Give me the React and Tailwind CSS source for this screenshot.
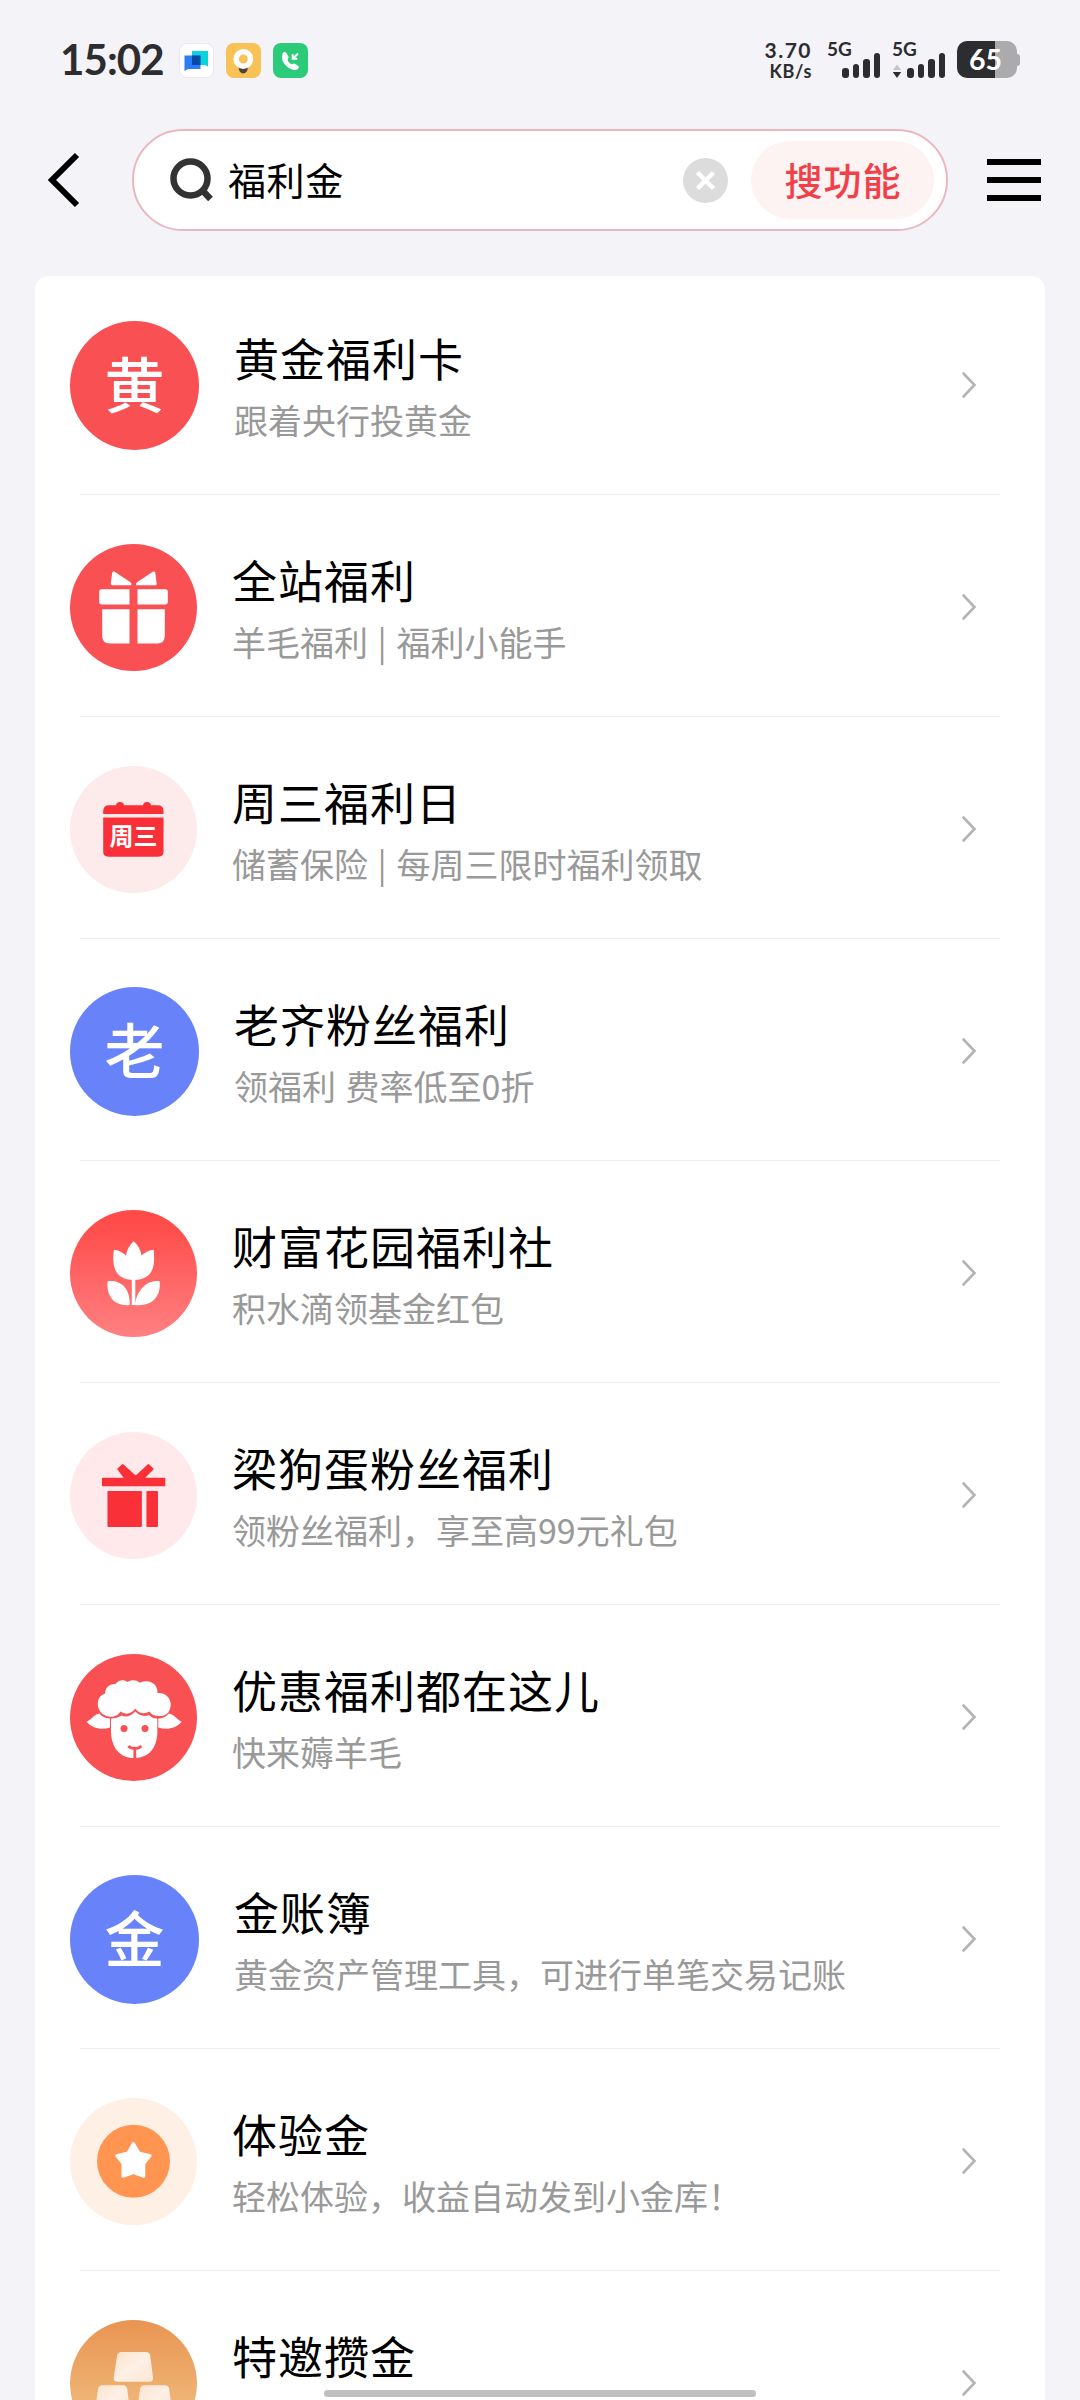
import React from "react";
import clsx from "clsx";

const GiftIcon = () => (
	<svg viewBox="0 0 127 127" className="size-full">
		<circle cx="63.5" cy="63.5" r="63.5" fill="#f95054" />
		<g fill="#fff">
			<path d="M40.8 39.5l1.4-10.8q.6-2 2.6-.9l15.6 10.5q1.400 1.200.9 2.900H42q-1.500-.2-1.200-1.700z" />
			<path d="M86.700 39.500l-1.400-10.800q-.6-2-2.600-.9l-15.600 10.500q-1.400 1.200-.9 2.900H85.500q1.500-.2 1.200-1.700z" />
			<path d="M59.500 45.200v15.200H31.500q-2.300 0-2.300-2.300V47.500q0-2.300 2.300-2.300z" />
			<path d="M67.500 45.200v15.200h28q2.300 0 2.300-2.300V47.500q0-2.300-2.300-2.300z" />
			<path d="M59.500 65.200v34.300H40q-7.800 0-7.800-7.800V65.200z" />
			<path d="M67.500 65.200v34.300H87q7.800 0 7.800-7.800V65.200z" />
		</g>
	</svg>
);

const CalendarIcon = () => (
	<svg viewBox="0 0 127 127" className="size-full">
		<circle cx="63.500" cy="63.500" r="63.500" fill="#fdeaea" />
		<g fill="#f93038">
			<circle cx="50" cy="40" r="4" />
			<circle cx="77" cy="40" r="4" />
			<path d="M33.200 48v-3q0-5.800 5.800-5.800h48.700q5.800 0 5.800 5.800V48z" />
			<path d="M33.200 51.500h60.300V85.500q0 5.200-5.200 5.200H38.400q-5.200 0-5.200-5.200z" />
		</g>
		<text
			x="63.500"
			y="79"
			textAnchor="middle"
			fontSize="24"
			fontWeight="700"
			fill="#fff"
		>
			周三
		</text>
	</svg>
);

const FlowerIcon = () => (
	<svg viewBox="0 0 127 127" className="size-full">
		<defs>
			<linearGradient id="flower" x1="0" y1="0" x2="0" y2="1">
				<stop offset="0" stopColor="#ff4a47" />
				<stop offset=".15" stopColor="#ff4f4d" />
				<stop offset="1" stopColor="#ff8082" />
			</linearGradient>
		</defs>
		<circle cx="63.500" cy="63.500" r="63.500" fill="url(#flower)" />
		<g fill="#fff">
			<path d="M63.700 31.300C68 35 70.500 39.500 71.500 45.500C74.500 42.500 79 40 83.600 39.700C85.500 56 83.500 69.500 63.700 70C44 69.500 42 56 43.800 39.700C48.500 40 53 42.500 56 45.500C57 39.500 59.500 35 63.700 31.300z" />
			<path d="M61.800 69h3.500v26h-3.500z" />
			<path d="M37.700 71.300C48 69.300 60.500 76 59.600 95C46 96.500 36 88 37.700 71.300z" />
			<path d="M89.700 71.300C79 69.300 67 78 64.800 95C81 96.500 91 88 89.700 71.300z" />
		</g>
	</svg>
);

const PresentIcon = () => (
	<svg viewBox="0 0 127 127" className="size-full">
		<circle cx="63.500" cy="63.500" r="63.500" fill="#ffe9eb" />
		<g fill="#f93038" stroke="#f93038" strokeWidth="1.500" strokeLinejoin="round">
			<path d="M32.700 46.400h22.300l-7-9.400 4.700-4.300 13 11.800 12.700-11.800 4.500 4.300-9.500 9.400h21.100v7H32.700z" />
			<path d="M38.200 59.700h32.900v34.600H38.200zM77.200 59.700h10v34.600h-10z" />
		</g>
	</svg>
);

const SheepIcon = () => (
	<svg viewBox="0 0 127 127" className="size-full">
		<circle cx="63.500" cy="63.500" r="63.500" fill="#f95054" />
		<g fill="#fff">
			<path d="M16.500 67.700C21 66 24.500 60 29.500 59.500C32 63 36 64.500 40 64.500V73.500C31 76.500 22 74 16.500 67.700z" />
			<path d="M111.800 67.700C107.300 66 103.800 60 98.800 59.500C96.300 63 92.300 64.500 88.300 64.500V73.500C97.300 76.500 106.300 74 111.800 67.700z" />
			<path d="M41 64.500C45 64.500 48.500 63.500 51.500 61.500C57 64 61.500 61.500 65.300 57.500C69 61.500 74 63 79 61C81.500 63.500 84 64.500 87.300 64.500V80C86.500 94 79 103 66.500 104H62C49 103 41.500 93 41 78z" />
			<path d="M40.500 62.700C32 62 27.500 56 27.800 49.500C28 44 31 41 35 39.500C35.500 33 40 29.500 45.500 30C49 25.500 54 25.500 57.500 28C61.500 25.500 66 25.500 70 28.700C80 24.500 88 30.500 87.500 39C95 38.500 100.500 43.500 100.700 50C100.700 57 97 62 91 62C85.500 62.500 82 61.500 79.500 57.500C74 60.500 68.500 59.500 65.300 54.500C62 59.500 56 61.500 50.500 57.500C48 61.500 45 62.700 40.500 62.700z" />
		</g>
		<circle cx="54" cy="74.500" r="3.500" fill="#f95054" />
		<circle cx="75" cy="74.500" r="3.500" fill="#f95054" />
		<path
			d="M58.300 92q3 3.200 6.500 2.200q3.500 1 6.500-2.200M64.800 94v11"
			fill="none"
			stroke="#f95054"
			strokeWidth="2.800"
		/>
	</svg>
);

const StarIcon = () => (
	<svg viewBox="0 0 127 127" className="size-full">
		<circle cx="63.500" cy="63.500" r="63.500" fill="#fff0e6" />
		<circle cx="63.500" cy="63.200" r="36.500" fill="#ff9550" />
		<path
			d="M63.400 45.500l5.500 9.500 11.200 2.600-6.300 7.900v12.800l-10.400-3.600-10.400 3.600v-12.800l-6.300-7.900 11.200-2.600z"
			fill="#fff"
			stroke="#fff"
			strokeWidth="3"
			strokeLinejoin="round"
		/>
	</svg>
);

const GoldIcon = () => (
	<svg viewBox="0 0 127 127" className="size-full">
		<defs>
			<linearGradient id="gold" x1="0" y1="0" x2="0" y2="1">
				<stop offset="0" stopColor="#e99452" />
				<stop offset="1" stopColor="#f2c688" />
			</linearGradient>
			<linearGradient id="ingot" x1="0" y1="0" x2="1" y2="1">
				<stop offset="0" stopColor="#fbe3cf" />
				<stop offset=".5" stopColor="#fdf0e5" />
				<stop offset="1" stopColor="#fbe6d4" />
			</linearGradient>
		</defs>
		<circle cx="63.500" cy="63.500" r="63.500" fill="url(#gold)" />
		<g fill="url(#ingot)">
			<path d="M51.500 32h24.500q3.500 0 4.200 3.500l2.800 22q.4 4.300-3.500 4.300H47.500q-4 0-3.700-4.300l3.300-22q.8-3.500 4.400-3.500z" />
			<path d="M32.500 65.200h20.500q3.500 0 4.200 3.500l2.800 22q.4 4.300-3.500 4.300H28.500q-4 0-3.700-4.300l3.300-22q.8-3.500 4.400-3.500z" />
			<path d="M74.500 65.200h20.500q3.500 0 4.200 3.500l2.800 22q.4 4.300-3.500 4.300H70.500q-4 0-3.700-4.300l3.300-22q.8-3.500 4.400-3.500z" />
		</g>
	</svg>
);

const ITEMS = [
	{ badge: "黄", badgeColor: "bg-[#f95054]", title: "黄金福利卡", desc: "跟着央行投黄金" },
	{ icon: GiftIcon, title: "全站福利", desc: "羊毛福利 | 福利小能手" },
	{ icon: CalendarIcon, title: "周三福利日", desc: "储蓄保险 | 每周三限时福利领取" },
	{ badge: "老", badgeColor: "bg-[#6882fa]", title: "老齐粉丝福利", desc: "领福利 费率低至0折" },
	{ icon: FlowerIcon, title: "财富花园福利社", desc: "积水滴领基金红包" },
	{ icon: PresentIcon, title: "梁狗蛋粉丝福利", desc: "领粉丝福利，享至高99元礼包" },
	{ icon: SheepIcon, title: "优惠福利都在这儿", desc: "快来薅羊毛" },
	{ badge: "金", badgeColor: "bg-[#6882fa]", title: "金账簿", desc: "黄金资产管理工具，可进行单笔交易记账" },
	{ icon: StarIcon, title: "体验金", desc: "轻松体验，收益自动发到小金库！" },
	{ icon: GoldIcon, title: "特邀攒金", desc: "" },
];

const Signal = () => (
	<div className="flex items-end gap-[4px]">
		<span className="h-[10px] w-[6.500px] rounded-[3px] bg-[#2d2d2f]" />
		<span className="h-[14px] w-[6.500px] rounded-[3px] bg-[#2d2d2f]" />
		<span className="h-[19px] w-[6.500px] rounded-[3px] bg-[#2d2d2f]" />
		<span className="h-[25px] w-[6.500px] rounded-[3px] bg-[#2d2d2f]" />
	</div>
);

const StatusBar = () => (
	<header className="flex h-[120px] items-center pl-[60px] pr-[60px] font-['Lato','Noto_Sans_CJK_SC',sans-serif] font-bold text-[#2d2d2f]">
		<span className="w-[119px] pb-[2px] text-[42px] leading-none tracking-[-0.9px]">15:02</span>

		{/* Notification icons */}
		<div className="flex gap-[12px]">
			<svg viewBox="0 0 35 35" className="size-[35px]">
				<rect x=".5" y=".5" width="34" height="34" rx="7.500" fill="#fff" stroke="#e9e9ee" />
				<path d="M13 8h16v15.500l-3-1.500H13z" fill="#0bd3dc" />
				<path d="M5.500 12.500h16v13.500H9L5.500 28z" fill="#2a7df6" />
				<path d="M13 12.500h8.500v9.500H13z" fill="#064aa6" />
			</svg>
			<svg viewBox="0 0 35 35" className="size-[35px]">
				<rect width="35" height="35" rx="8" fill="#f8c257" />
				<path d="M12.500 24h9.500q-.5 6-4.700 6.500q-4.300-.5-4.800-6.500z" fill="#4a4540" />
				<circle cx="17.300" cy="16" r="7.200" fill="#f8c257" stroke="#fff" strokeWidth="5.500" />
			</svg>
			<svg viewBox="0 0 35 35" className="size-[35px]">
				<rect width="35" height="35" rx="8" fill="#2ccb79" />
				<path
					d="M9.500 10.500q2-2.500 3.800-.5l2 3.200q1 1.700-.7 3.100q.4 3.700 4.400 5.200q1.600-1.600 3.300-.5l3 2q1.500 1.500-.8 3.200q-4 2-9.500-1.700q-8-6-5.500-14z"
					fill="#fff"
				/>
				<path d="M25 10.500l-4.500 4.500M19.700 11.200v4.600h4.600" fill="none" stroke="#fff" strokeWidth="2" />
			</svg>
		</div>

		<div className="ml-auto flex h-[36px] items-end">
			<div className="mr-[15px] flex h-full w-[48px] flex-col items-end">
				<span className="-mt-px text-[21px] leading-[18px] tracking-[1.500px]">3.70</span>
				<span className="mt-[3px] text-[18px] leading-[18px] tracking-[0.7px]">KB/s</span>
			</div>
			<div className="flex h-full w-[65px] flex-col">
				<span className="h-[11px] text-[19px] leading-[14px]">5G</span>
				<div className="ml-[15px] flex">
					<Signal />
				</div>
			</div>
			<div className="flex h-full w-[65px] flex-col">
				<span className="h-[11px] text-[19px] leading-[14px]">5G</span>
				<div className="flex items-end gap-[5px]">
					<svg viewBox="0 0 10 14" className="h-[14px] w-[10px]">
						<path d="M1 6l4-5.500L9 6z" fill="#c4c4c8" />
						<path d="M.8 8h8.400L5 14z" fill="#2d2d2f" />
					</svg>
					<Signal />
				</div>
			</div>
			<div className="flex h-[37px] items-center">
				<div className="flex h-[37px] w-[60px] items-center justify-center rounded-[10px] bg-linear-to-r from-[#2d2d2f] from-[63%] to-[#ababad] to-[63%]">
					<span className="-ml-[3px] text-[28.500px] leading-none text-white">65</span>
				</div>
				<span className="h-[12px] w-[3px] rounded-r-[3px] bg-[#ababad]" />
			</div>
		</div>
	</header>
);

const SearchBar = () => (
	<div className="flex h-[120px] items-center pl-[46px] pr-[39px]">
		<svg viewBox="0 0 36 56" className="h-[56px] w-[36px]">
			<path d="M31 3L6 28l25 25" fill="none" stroke="#000" strokeWidth="6" />
		</svg>
		<div className="ml-[50px] flex h-[102px] w-[816px] items-center rounded-full border-2 border-[#ebb7bf] bg-white pl-[36px] pr-[12px]">
			<svg viewBox="0 0 44 44" className="h-[44px] w-[44px]">
				<circle cx="20.500" cy="20.500" r="17" fill="none" stroke="#333" strokeWidth="6.500" />
				<path d="M32 32l8.500 9" stroke="#333" strokeWidth="6.500" />
			</svg>
			<span className="ml-[14px] pb-[3px] text-[38px] leading-none tracking-[0.600px] text-black">福利金</span>
			<svg viewBox="0 0 45 45" className="ml-auto size-[45px]">
				<circle cx="22.500" cy="22.500" r="22.500" fill="#dcdcdc" />
				<path d="M14.500 14.500l16 16M30.500 14.500l-16 16" stroke="#fff" strokeWidth="4.500" />
			</svg>
			<button className="ml-[23px] h-[78px] w-[183px] rounded-full bg-[#fdf3f2] pb-[3px] pl-px text-[38px] font-medium leading-none tracking-[1px] text-[#f2404b]">
				搜功能
			</button>
		</div>
		<div className="ml-auto flex w-[54px] flex-col gap-[12px]">
			<span className="h-[6px] bg-black" />
			<span className="h-[6px] bg-black" />
			<span className="h-[6px] bg-black" />
		</div>
	</div>
);

const ResultRow = ({ item }) => {
	const Icon = item.icon;

	return (
		<li>
			<div className="flex h-[218px] items-center pl-[35px] pr-[68px] pt-px">
				{Icon ? (
					<div className="size-[127px] shrink-0">
						<Icon />
					</div>
				) : (
					<div
						className={clsx(
							"flex size-[129px] shrink-0 items-center justify-center rounded-full pb-[7px] text-[60px] font-medium leading-none text-white",
							item.badgeColor
						)}
					>
						{item.badge}
					</div>
				)}
				<div className="ml-[35px] flex h-[124px] flex-col">
					<h2 className="h-[66px] text-[45px] leading-[68px] tracking-[1px] text-black">{item.title}</h2>
					<p className="text-[34px] leading-[60px] text-[#999] [word-spacing:2px]">{item.desc}</p>
				</div>
				<svg viewBox="0 0 16 28" className="mb-px ml-auto h-[28px] w-[16px]">
					<path
						d="M2.500 2.500L13.500 14l-11 11.500"
						fill="none"
						stroke="#b4b4b4"
						strokeWidth="2.600"
						strokeLinecap="round"
					/>
				</svg>
			</div>
			<div className="mx-[45px] h-px bg-[#eeeeef]" />
		</li>
	);
};

const App = () => {
	return (
		<div
			lang="zh-CN"
			className="relative h-[2400px] w-[1080px] overflow-hidden bg-[#f3f3f8] font-['Noto_Sans_CJK_SC',sans-serif]"
		>
			<StatusBar />
			<SearchBar />
			<ul className="mx-[35px] mt-[36px] flex flex-col gap-[3px] rounded-[14px] bg-white">
				{ITEMS.map((item) => (
					<ResultRow key={item.title} item={item} />
				))}
			</ul>

			{/* Home indicator */}
			<div className="absolute bottom-[3px] left-[324px] h-[7px] w-[432px] rounded-full bg-[#c0c0c0]" />
		</div>
	);
};

export default App;
